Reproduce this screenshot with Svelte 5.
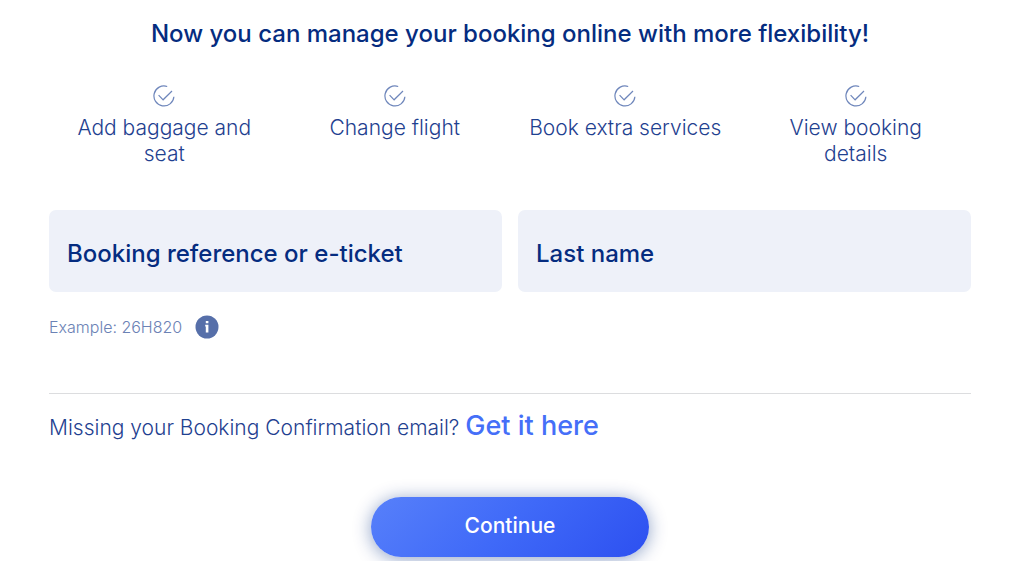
<script lang="ts">
	type Field = {
		id: string;
		label: string;
	}

	const features = [
		'Add baggage and seat',
		'Change flight',
		'Book extra services',
		'View booking details',
	];

	const fields: Field[] = [
		{ id: 'reference', label: 'Booking reference or e-ticket' },
		{ id: 'lastName', label: 'Last name' },
	];

	let values: Record<string, string> = $state({ reference: '', lastName: '' });

	const onsubmit = (event: SubmitEvent) => {
		event.preventDefault();
	};
</script>

<main class="manageBooking">
	<h2>Now you can manage your booking online with more flexibility!</h2>

	<ul class="features">
		{#each features as feature}
			<li>
				<svg viewBox="0 0 22 22" aria-hidden="true">
					<path d="M14.2 1.5A10 10 0 1 0 20.9 11.8" />
					<path d="M5.6 10.2L10.1 14.8L19 6" />
				</svg>
				<span>{feature}</span>
			</li>
		{/each}
	</ul>

	<form {onsubmit}>
		<div class="fields">
			{#each fields as field}
				<div class="field">
					<input id={field.id} type="text" bind:value={values[field.id]} />
					<label for={field.id} class:filled={values[field.id] !== ''}>{field.label}</label>
				</div>
			{/each}
		</div>

		<div class="hint">
			<span>Example: 26H820</span>
			<button type="button" class="info" aria-label="Booking reference help">
				<svg viewBox="0 0 24 24" aria-hidden="true">
					<circle cx="12" cy="12" r="11.5" />
					<path d="M10.8 6h2.6v2.2h-2.6zM10.2 9.8h3.2v7.8h-2.6v-6.2h-.6z" />
				</svg>
			</button>
		</div>

		<p class="missing">
			Missing your Booking Confirmation email? <a href="#confirmation">Get it here</a>
		</p>

		<button type="submit" class="continue">Continue</button>
	</form>
</main>

<style>
	:global(body) {
		background: #fff;
	}

	.manageBooking {
		padding: 17px 53px 4px 49px;
		font-family: Inter, "Liberation Sans", sans-serif;
		color: #052c80;
	}

	h2 {
		margin: 0;
		font-size: 24px;
		line-height: 34px;
		font-weight: 500;
		text-align: center;
	}

	.features {
		display: grid;
		grid-template-columns: repeat(4, 1fr);
		margin: 34px 0 0;
		padding: 0;
		list-style: none;
	}

	.features li {
		display: flex;
		flex-direction: column;
		align-items: center;
		gap: 8px;
		padding: 0 18px;
		font-size: 21px;
		line-height: 26px;
		font-weight: 300;
		text-align: center;
		color: #1f4190;
	}

	.features svg {
		width: 22px;
		height: 22px;
		fill: none;
		stroke: #6e86bb;
		stroke-width: 1.2;
	}

	.fields {
		display: grid;
		grid-template-columns: 1fr 1fr;
		gap: 16px;
		margin-top: 43px;
	}

	.field {
		display: grid;
		align-items: center;
		height: 82px;
		border-radius: 7px;
		background: #eef1f9;
	}

	.field input,
	.field label {
		grid-area: 1 / 1;
	}

	.field input {
		box-sizing: border-box;
		width: 100%;
		height: 100%;
		padding: 24px 18px 0;
		border: 0;
		border-radius: 7px;
		background: transparent;
		font: inherit;
		font-size: 21px;
		color: inherit;
	}

	.field label {
		padding: 6px 18px 0;
		font-size: 24px;
		line-height: 32px;
		font-weight: 500;
		pointer-events: none;
	}

	.field label.filled {
		align-self: start;
		font-size: 16px;
	}

	.hint {
		display: flex;
		align-items: center;
		gap: 13px;
		margin-top: 23px;
		font-size: 16px;
		line-height: 24px;
		font-weight: 300;
		color: #6b82b5;
	}

	.info {
		display: flex;
		padding: 0;
		border: 0;
		background: none;
		cursor: pointer;
	}

	.info svg {
		width: 24px;
		height: 24px;
	}

	.info circle {
		fill: #566fa9;
	}

	.info path {
		fill: #fff;
	}

	.missing {
		margin: 54px 0 0;
		padding-top: 15px;
		border-top: 1px solid #dcdddf;
		font-size: 21px;
		line-height: 34px;
		font-weight: 300;
		color: #1f4190;
	}

	.missing a {
		font-size: 27px;
		font-weight: 500;
		color: #456ff8;
		text-decoration: none;
	}

	.continue {
		display: block;
		width: 278px;
		height: 60px;
		margin: 52px auto 0;
		padding: 0 0 4px;
		border: 0;
		border-radius: 30px;
		background: linear-gradient(135deg, #5780fa, #3f69f8 50%, #2d50f0);
		box-shadow: 0 2px 18px rgba(5, 44, 128, 0.45);
		font: inherit;
		font-size: 21px;
		font-weight: 500;
		color: #fff;
		cursor: pointer;
	}
</style>
